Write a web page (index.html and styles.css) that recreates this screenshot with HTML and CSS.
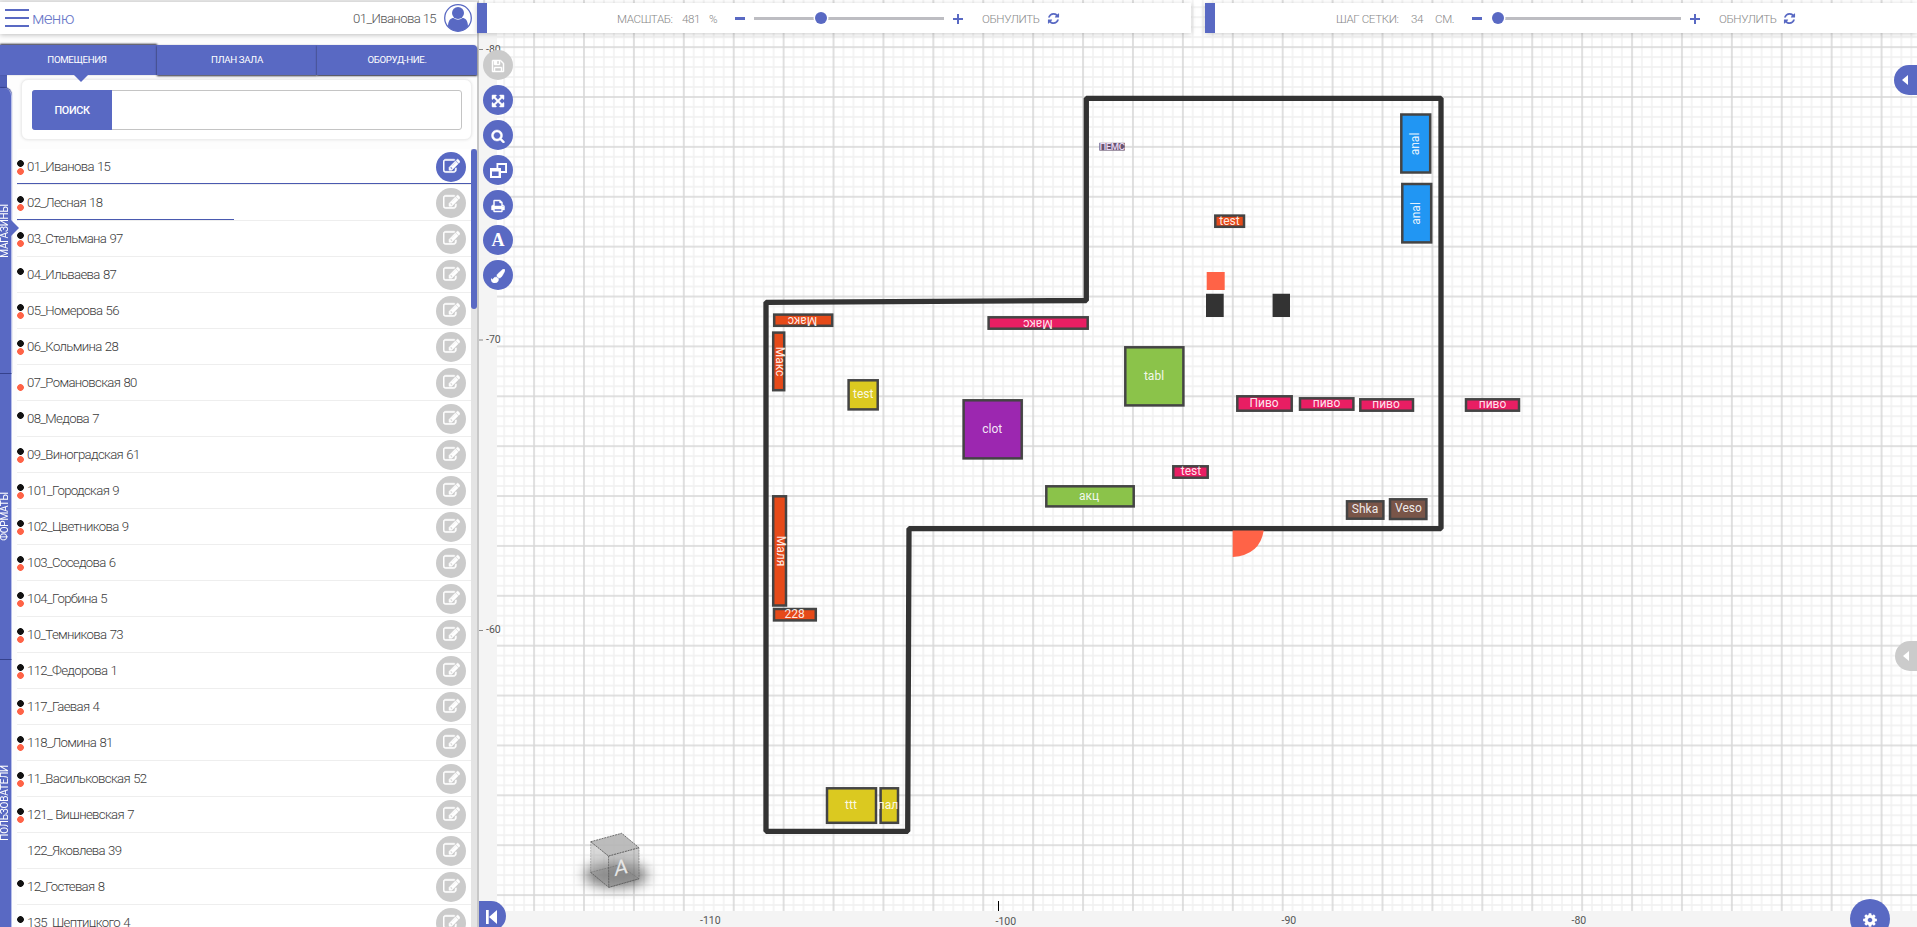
FILE: index.html
```html
<!DOCTYPE html>
<html lang="ru">
<head>
<meta charset="utf-8">
<title>План зала</title>
<link rel="stylesheet" href="styles.css">
</head>
<body>
<svg class="defs" width="0" height="0">
  <symbol id="edit" viewBox="0 0 1792 1792"><path d="M888 1184l116-116-152-152-116 116v56h96v96h56zm440-720q-16-16-33 1l-350 350q-17 17-1 33t33-1l350-350q17-17 1-33zm80 594v190q0 119-84.5 203.5t-203.5 84.5h-832q-119 0-203.5-84.5t-84.5-203.5v-832q0-119 84.5-203.5t203.5-84.5h832q63 0 117 25 15 7 18 23 3 17-9 29l-49 49q-14 14-32 8-23-6-45-6h-832q-66 0-113 47t-47 113v832q0 66 47 113t113 47h832q66 0 113-47t47-113v-126q0-13 9-22l64-64q15-15 35-7t20 29zm-96-738l288 288-672 672h-288v-288zm444 132l-92 92-288-288 92-92q28-28 68-28t68 28l152 152q28 28 28 68t-28 68z"/></symbol>
  <symbol id="save" viewBox="0 0 1792 1792"><path d="M512 1536h768v-384h-768v384zm896 0h128v-896q0-14-10-38.5t-20-34.5l-281-281q-10-10-34-20t-39-10v416q0 40-28 68t-68 28h-576q-40 0-68-28t-28-68v-416h-128v1280h128v-416q0-40 28-68t68-28h832q40 0 68 28t28 68v416zm-384-928v-320q0-13-9.5-22.5t-22.5-9.5h-192q-13 0-22.5 9.5t-9.5 22.5v320q0 13 9.5 22.5t22.5 9.5h192q13 0 22.5-9.5t9.5-22.5zm640 32v928q0 40-28 68t-68 28h-1344q-40 0-68-28t-28-68v-1344q0-40 28-68t68-28h928q40 0 88 20t76 48l280 280q28 28 48 76t20 88z"/></symbol>
  <symbol id="expand" viewBox="0 0 1792 1792"><path d="M1411 541l-355 355 355 355 144-144q29-31 70-14 39 17 39 59v448q0 26-19 45t-45 19h-448q-42 0-59-40-17-39 14-69l144-144-355-355-355 355 144 144q31 30 14 69-17 40-59 40h-448q-26 0-45-19t-19-45v-448q0-42 40-59 39-17 69 14l144 144 355-355-355-355-144 144q-19 19-45 19-12 0-24-5-40-17-40-59v-448q0-26 19-45t45-19h448q42 0 59 40 17 39-14 69l-144 144 355 355 355-355-144-144q-31-30-14-69 17-40 59-40h448q26 0 45 19t19 45v448q0 42-39 59-13 5-25 5-26 0-45-19z"/></symbol>
  <symbol id="search" viewBox="0 0 1792 1792"><path d="M1216 832q0-185-131.5-316.5t-316.5-131.5-316.5 131.5-131.5 316.5 131.5 316.5 316.5 131.5 316.5-131.5 131.5-316.5zm512 832q0 52-38 90t-90 38q-54 0-90-38l-343-342q-179 124-399 124-143 0-273.5-55.5t-225-150-150-225-55.5-273.5 55.5-273.5 150-225 225-150 273.5-55.5 273.5 55.5 225 150 150 225 55.5 273.5q0 220-124 399l343 343q37 37 37 90z"/></symbol>
  <symbol id="layers" viewBox="0 0 17 15"><path fill-rule="evenodd" d="M6.5 0H17V10H11V15H0V5H6.5ZM8.3 1.9V5H11V8.1H15.1V1.9ZM2 8.6V13.1H8.6V8.6Z"/></symbol>
  <symbol id="print" viewBox="0 0 1792 1792"><path d="M448 1536h896v-256h-896v256zm0-640h896v-384h-160q-40 0-68-28t-28-68v-160h-640v640zm1152 64q0-26-19-45t-45-19-45 19-19 45 19 45 45 19 45-19 19-45zm128 0v416q0 13-9.5 22.5t-22.5 9.5h-224v160q0 40-28 68t-68 28h-960q-40 0-68-28t-28-68v-160h-224q-13 0-22.5-9.5t-9.5-22.5v-416q0-79 56.5-135.5t135.5-56.5h64v-544q0-40 28-68t68-28h672q40 0 88 20t76 48l152 152q28 28 48 76t20 88v256h64q79 0 135.5 56.5t56.5 135.5z"/></symbol>
  <symbol id="brush" viewBox="0 0 1792 1792"><path d="M1615 0q70 0 122.5 46.5t52.5 116.5q0 63-45 151-332 629-465 752-97 91-218 91-126 0-216.5-92.5t-90.5-219.5q0-128 92-212l638-579q59-54 130-54zm-909 1034q39 76 106.5 130t150.5 76l1 71q4 213-129.5 347t-348.5 134q-123 0-218-46.5t-152.5-127.5-86.5-183-29-220q7 5 41 30t62 44.5 59 36.5 46 17q41 0 55-37 25-66 57.5-112.5t69.5-76 88-47.5 103-25.5 125-10.5z"/></symbol>
  <symbol id="refresh" viewBox="0 0 1792 1792"><path d="M1639 1056q0 5-1 7-64 268-268 434.5t-478 166.5q-146 0-282.5-55t-243.5-157l-129 129q-19 19-45 19t-45-19-19-45v-448q0-26 19-45t45-19h448q26 0 45 19t19 45-19 45l-137 137q71 66 161 102t187 36q134 0 250-65t186-179q11-17 53-117 8-23 30-23h192q13 0 22.5 9.5t9.5 22.5zm25-800v448q0 26-19 45t-45 19h-448q-26 0-45-19t-19-45 19-45l138-138q-148-137-349-137-134 0-250 65t-186 179q-11 17-53 117-8 23-30 23h-199q-13 0-22.5-9.5t-9.5-22.5v-7q65-268 270-434.5t480-166.5q146 0 284 55.5t245 156.5l130-129q19-19 45-19t45 19 19 45z"/></symbol>
  <symbol id="cog" viewBox="0 0 1792 1792"><path d="M1152 896q0-106-75-181t-181-75-181 75-75 181 75 181 181 75 181-75 75-181zm512-109v222q0 12-8 23t-20 13l-185 28q-19 54-39 91 35 50 107 138 10 12 10 25t-9 23q-27 37-99 108t-94 71q-12 0-26-9l-138-108q-44 23-91 38-16 136-29 186-7 28-36 28h-222q-14 0-24.5-8.5t-11.5-21.5l-28-184q-49-16-90-37l-141 107q-10 9-25 9-14 0-25-11-126-114-165-168-7-10-7-23 0-12 8-23 15-21 51-66.5t54-70.5q-27-50-41-99l-183-27q-13-2-21-12.5t-8-23.5v-222q0-12 8-23t19-13l186-28q14-46 39-92-40-57-107-138-10-12-10-24 0-10 9-23 26-36 98.5-107.5t94.5-71.5q13 0 26 10l138 107q44-23 91-38 16-136 29-186 7-28 36-28h222q14 0 24.5 8.5t11.5 21.5l28 184q49 16 90 37l142-107q9-9 24-9 13 0 25 10 129 119 165 170 7 8 7 22 0 12-8 23-15 21-51 66.5t-54 70.5q26 50 41 98l183 28q13 2 21 12.5t8 23.5z"/></symbol>
  <symbol id="left" viewBox="0 0 6 10"><path d="M6 0V10L0 5Z"/></symbol>
</svg>

<div class="app">
  <aside class="sidebar">
    <header class="head">
      <div class="burger"><i></i><i></i><i></i></div>
      <span class="menu">меню</span>
      <span class="shop">01_Иванова 15</span>
      <svg class="avatar" viewBox="0 0 28 28"><circle cx="14" cy="14" r="13.3" fill="#fff" stroke="#5969c3" stroke-width="1.3"/><circle cx="14" cy="9" r="6" fill="#5969c3"/><path fill="#5969c3" d="M4 22.5C4 16 7 14 9.5 14Q14 17.5 18.500 14C21 14 24 16 24 22.500A13 13 0 0 1 4 22.500Z"/></svg>
    </header>
    <nav class="tabs">
      <div class="tab on">ПОМЕЩЕНИЯ</div>
      <div class="tab">ПЛАН ЗАЛА</div>
      <div class="tab last">ОБОРУД-НИЕ.</div>
    </nav>
    <div class="body">
      <div class="rail">
        <div class="sect first"><span>МАГАЗИНЫ</span></div>
        <div class="sect"><span>ФОРМАТЫ</span></div>
        <div class="sect"><span>ПОЛЬЗОВАТЕЛИ</span></div>
      </div>
      <div class="panel">
        <div class="card"><div class="field"><b>ПОИСК</b></div></div>
        <div class="listwrap">
          <ul class="list">
            <li class="full"><em class="br"></em>01_Иванова 15<span class="ed blue"><svg><use href="#edit"/></svg></span></li>
            <li class="half"><em class="br"></em>02_Лесная 18<span class="ed"><svg><use href="#edit"/></svg></span></li>
            <li><em class="br"></em>03_Стельмана 97<span class="ed"><svg><use href="#edit"/></svg></span></li>
            <li><em class="b"></em>04_Ильваева 87<span class="ed"><svg><use href="#edit"/></svg></span></li>
            <li><em class="br"></em>05_Номерова 56<span class="ed"><svg><use href="#edit"/></svg></span></li>
            <li><em class="br"></em>06_Кольмина 28<span class="ed"><svg><use href="#edit"/></svg></span></li>
            <li><em class="r"></em>07_Романовская 80<span class="ed"><svg><use href="#edit"/></svg></span></li>
            <li><em class="b"></em>08_Медова 7<span class="ed"><svg><use href="#edit"/></svg></span></li>
            <li><em class="br"></em>09_Виноградская 61<span class="ed"><svg><use href="#edit"/></svg></span></li>
            <li><em class="br"></em>101_Городская 9<span class="ed"><svg><use href="#edit"/></svg></span></li>
            <li><em class="br"></em>102_Цветникова 9<span class="ed"><svg><use href="#edit"/></svg></span></li>
            <li><em class="br"></em>103_Соседова 6<span class="ed"><svg><use href="#edit"/></svg></span></li>
            <li><em class="br"></em>104_Горбина 5<span class="ed"><svg><use href="#edit"/></svg></span></li>
            <li><em class="br"></em>10_Темникова 73<span class="ed"><svg><use href="#edit"/></svg></span></li>
            <li><em class="br"></em>112_Федорова 1<span class="ed"><svg><use href="#edit"/></svg></span></li>
            <li><em class="br"></em>117_Гаевая 4<span class="ed"><svg><use href="#edit"/></svg></span></li>
            <li><em class="br"></em>118_Ломина 81<span class="ed"><svg><use href="#edit"/></svg></span></li>
            <li><em class="br"></em>11_Васильковская 52<span class="ed"><svg><use href="#edit"/></svg></span></li>
            <li><em class="br"></em>121_ Вишневская 7<span class="ed"><svg><use href="#edit"/></svg></span></li>
            <li><em></em>122_Яковлева 39<span class="ed"><svg><use href="#edit"/></svg></span></li>
            <li><em class="b"></em>12_Гостевая 8<span class="ed"><svg><use href="#edit"/></svg></span></li>
            <li><em class="b"></em>135_Шептицкого 4<span class="ed"><svg><use href="#edit"/></svg></span></li>
          </ul>
          <div class="scroll"><i></i></div>
        </div>
      </div>
    </div>
  </aside>

  <main class="work">
    <!-- floor plan; user units are window pixels -->
    <svg class="plan" viewBox="477 0 1440 927">
      <defs>
        <pattern id="minor" patternUnits="userSpaceOnUse" x="778.6" y="42.1" width="9.98" height="9.976"><path d="M0 4.99H9.98M4.99 0V9.98" stroke="#000" stroke-opacity=".06" stroke-width="1.4"/></pattern>
        <pattern id="major" patternUnits="userSpaceOnUse" x="758.7" y="22.2" width="49.91" height="49.88"><path d="M0 24.95H49.910M24.95 0V49.9" stroke="#000" stroke-opacity=".1" stroke-width="1.6"/></pattern>
        <filter id="soft" x="-50%" y="-50%" width="200%" height="200%"><feGaussianBlur stdDeviation="7"/></filter>
      </defs>
      <rect x="477" width="1440" height="927" fill="#fff"/>
      <rect x="477" width="1440" height="927" fill="url(#minor)"/>
      <rect x="477" width="1440" height="927" fill="url(#major)"/>

      <ellipse cx="616" cy="875" rx="32" ry="12" fill="#000" opacity=".55" filter="url(#soft)"/>
      <g stroke="#555" stroke-width=".8" stroke-dasharray="2 .8">
        <path d="M590.700 872.300L619 865 639 878.700 609 887.300Z" fill="#777" fill-opacity=".4"/>
        <path d="M590.700 841.700L608.500 856V887.300L590.700 872.300Z" fill="#aaa" fill-opacity=".45" stroke-opacity=".45"/>
        <path d="M608.500 856L639 847.700V878.700L609 887.300Z" fill="#999" fill-opacity=".5" stroke-opacity=".6"/>
        <path d="M590.700 841.700L621.700 833.300 639 847.700 608.500 856Z" fill="#b5b5b5" fill-opacity=".9"/>
      </g>
      <text class="face" transform="translate(621 874.500) skewY(-14)">A</text>

      <path class="ruler" d="M477 33H497V911H1917V927H477Z"/>
      <path d="M479 49.500H483M479 340H483M479 630.500H483" stroke="#888"/>
      <path d="M998.500 901V911" stroke="#000"/>
      <g class="num"><text x="486" y="52.500">-80</text><text x="486" y="343.200">-70</text><text x="486" y="633">-60</text>
        <text x="700" y="923.500">-110</text><text x="995.500" y="925">-100</text><text x="1281.500" y="923.500">-90</text><text x="1571.500" y="923.500">-80</text></g>

      <path d="M1086.300 98.300H1441V528.600H909L907.700 831.300H766V302.300L1086.300 300.500Z" fill="none" stroke="#333" stroke-width="5.300" stroke-linejoin="bevel"/>
      <path d="M1232.700 530.500H1263.700Q1260 555 1232.700 557Z" fill="#ff6347"/>
      <path d="M1206.700 272H1224.700V290H1206.700Z" fill="#ff6347"/>
      <path d="M1206 293.700H1223.700V317H1206ZM1272.600 293.700H1290V317H1272.600Z" fill="#333"/>

      <g class="items">
        <rect x="774.2" y="314.6" width="58" height="11.200" fill="#e64a19"/>
        <rect x="773.2" y="332.600" width="11" height="57.600" fill="#e64a19"/>
        <rect x="773.2" y="496.300" width="12.800" height="109.200" fill="#e64a19"/>
        <rect x="774" y="609" width="41.800" height="11.400" fill="#e64a19"/>
        <rect x="1215.300" y="215.600" width="28.700" height="11.200" fill="#e64a19"/>
        <rect x="848.600" y="380.300" width="29.100" height="29.100" fill="#dbc920"/>
        <rect x="827" y="788.300" width="49" height="34.500" fill="#dbc920"/>
        <rect x="880.600" y="788.300" width="17.400" height="34.500" fill="#dbc920"/>
        <rect x="963.600" y="400.300" width="58.100" height="58.100" fill="#9c27b0"/>
        <rect x="1125.300" y="347.300" width="58.100" height="58.100" fill="#8bc34a"/>
        <rect x="1046.300" y="486.300" width="87.400" height="20.100" fill="#8bc34a"/>
        <rect x="988.600" y="317.300" width="99.100" height="11.400" fill="#e91e63"/>
        <rect x="1173.300" y="466.300" width="34.400" height="11.400" fill="#e91e63"/>
        <rect x="1237.300" y="396.300" width="54.400" height="14.400" fill="#e91e63"/>
        <rect x="1300" y="398.300" width="53.400" height="11.400" fill="#e91e63"/>
        <rect x="1360.300" y="399.300" width="52.700" height="11.400" fill="#e91e63"/>
        <rect x="1466" y="399.300" width="53" height="11.400" fill="#e91e63"/>
        <rect x="1347" y="501.300" width="36.400" height="17.400" fill="#795548"/>
        <rect x="1390" y="499.300" width="36.400" height="19.700" fill="#795548"/>
        <rect x="1401.300" y="114.500" width="28.900" height="58" fill="#2196f3"/>
        <rect x="1402.300" y="184" width="28.900" height="58.400" fill="#2196f3"/>
      </g>
      <g class="tags">
        <text transform="translate(802.500 316.500) rotate(180)">Макс</text>
        <text transform="translate(775.500 361.500) rotate(90)">Макс</text>
        <text transform="translate(776.500 551) rotate(90)">Маля</text>
        <text x="794.700" y="618">228</text>
        <text x="1229.500" y="224.700">test</text>
        <text x="863.300" y="398">test</text>
        <text x="851" y="808.500">ttt</text>
        <text x="888" y="808.500">пал</text>
        <text x="992.300" y="433">clot</text>
        <text x="1154" y="379.500">tabl</text>
        <text x="1089" y="500">акц</text>
        <text transform="translate(1038 320) rotate(180)">Макс</text>
        <text x="1191" y="474.500">test</text>
        <text x="1264" y="407">Пиво</text>
        <text x="1326.500" y="406.700">пиво</text>
        <text x="1386" y="407.500">пиво</text>
        <text x="1492.500" y="407.500">пиво</text>
        <text x="1365" y="512.500">Shka</text>
        <text x="1408.500" y="512">Veso</text>
        <text transform="translate(1419 144) rotate(-90)">anal</text>
        <text transform="translate(1420 213.500) rotate(-90)">anal</text>
      </g>
      <rect x="1099.300" y="142.800" width="25.500" height="7.800" fill="#665470"/>
      <text class="tiny" x="1112" y="150.300">ПЕМС</text>
    </svg>

    <div class="bars">
      <div class="bar zoom">
        <span class="w1">МАСШТАБ:</span><span class="w2">481</span><span class="w3">%</span>
        <i class="minus"></i><div class="track t1"><i></i></div><i class="minus plus"></i>
        <span class="w4">ОБНУЛИТЬ</span><svg class="re"><use href="#refresh"/></svg>
      </div>
      <div class="bar step">
        <span class="w5">ШАГ СЕТКИ:</span><span class="w6">34</span><span class="w7">СМ.</span>
        <i class="minus"></i><div class="track t2"><i></i></div><i class="minus plus"></i>
        <span class="w8">ОБНУЛИТЬ</span><svg class="re"><use href="#refresh"/></svg>
      </div>
    </div>
    <div class="tools">
      <span class="off"><svg><use href="#save"/></svg></span>
      <span><svg><use href="#expand"/></svg></span>
      <span><svg><use href="#search"/></svg></span>
      <span><svg class="wide"><use href="#layers"/></svg></span>
      <span><svg><use href="#print"/></svg></span>
      <span class="letter">A</span>
      <span><svg><use href="#brush"/></svg></span>
    </div>
    <div class="pull up"><svg><use href="#left"/></svg></div>
    <div class="pull down"><svg><use href="#left"/></svg></div>
    <div class="rewind"><svg viewBox="0 0 11 14"><path d="M0 0H2.700V14H0ZM11 0V14L3 7Z"/></svg></div>
    <div class="gear"><svg><use href="#cog"/></svg></div>
  </main>
</div>
</body>
</html>
```
FILE: styles.css
```css
* { box-sizing: border-box; }
body { margin: 0; font-family: Roboto, "Noto Sans", sans-serif; font-weight: 300; overflow: hidden; }
.defs { position: absolute; }
svg { fill: currentColor; display: block; }
.app { display: flex; height: 927px; overflow: hidden; }

.sidebar { width: 479px; flex: none; background: #fdfdfd; border-top: 2px solid #ececec; border-right: 2px solid #c8c8c8; display: flex; flex-direction: column; position: relative; z-index: 1; }
.head { height: 32px; flex: none; background: #fff; box-shadow: 0 1px 5px rgba(0,0,0,.25); display: flex; align-items: center; padding: 0 5px; font-size: 13.2px; color: #555; }
.burger { width: 24px; display: flex; flex-direction: column; gap: 6px; margin-right: 3px; }
.burger i { height: 2px; background: #5969c3; }
.menu { font-size: 17px; letter-spacing: -.7px; color: #6b79c9; flex: 1; }
.shop { margin-right: 8px; letter-spacing: -.64px; }
.avatar { width: 28px; height: 28px; }

.tabs { height: 30px; flex: none; margin-top: 11px; display: grid; grid-template-columns: 157px 160px 160px; position: relative; z-index: 2; }
.tab { background: #5969c3; color: #fff; font-size: 9.7px; font-weight: 400; display: flex; align-items: center; justify-content: center; letter-spacing: -.35px; padding-bottom: 1px; box-shadow: 0 1px 2px #223; position: relative; }
.tab.on { box-shadow: 0 -1px 2px #223; padding-right: 3px; }
.tab.on::after { content: ""; position: absolute; left: 74px; top: 30px; border: 7px solid transparent; border-top-color: #5969c3; border-bottom: 0; }
.tab.last { border-radius: 0 4px 0 0; }

.body { flex: 1; display: flex; min-height: 0; }
.rail { width: 12px; flex: none; padding-top: 13px; background: linear-gradient(90deg, #5060b8 7px, transparent 7px) top/100% 18px no-repeat; }
.sect { height: 286px; width: 12px; background: #5969c3; border-bottom: 1px solid #35418c; border-right: 1px solid #b9c0ea; display: flex; align-items: center; justify-content: flex-start; color: #fff; position: relative; font-size: 10px; font-weight: 400; }
.sect span { writing-mode: vertical-rl; transform: rotate(180deg); line-height: 9px; letter-spacing: -.2px; }
.first { border-radius: 0 8px 0 0; box-shadow: 0 -1px 1px #35418c; }
.first::after { content: ""; position: absolute; left: 11px; top: 132px; border: 8px solid transparent; border-left-color: #5969c3; border-right: 0; }
.panel { flex: 1; display: flex; flex-direction: column; min-width: 0; padding-left: 5px; }
.card { height: 61px; flex: none; margin: 4px 5px 0 4px; border-radius: 7px; background: #fff; border: 1px solid #eee; box-shadow: 0 0 3px rgba(0,0,0,.1); padding: 10px 9px 10px 10px; }
.field { height: 40px; border: 1px solid #c4c4c4; border-radius: 3px; display: flex; }
.field b { width: 80px; margin: -1px; background: #5969c3; color: #fff; font-size: 10.8px; font-weight: 500; letter-spacing: -.35px; display: flex; align-items: center; justify-content: center; border-radius: 3px 0 0 3px; }

.listwrap { flex: 1; display: flex; min-height: 0; padding-top: 9px; }
.list { flex: 1; list-style: none; margin: 0; padding: 0; background: #fff; overflow: hidden; }
.list li { height: 36px; border-bottom: 1px solid #eee; display: flex; align-items: center; font-size: 13.2px; letter-spacing: -.66px; word-spacing: .6px; color: #3c3c3c; position: relative; }
.list li.full::after, .list li.half::after { content: ""; position: absolute; left: 0; bottom: 0; width: 100%; height: 1px; background: #4a5ab0; }
.list li.half::after { width: 217px; }
.list em { width: 7px; height: 15px; margin: 1px 3px 0 0; }
.b, .br { background: radial-gradient(circle at 3.5px 3.5px, #111 3px, transparent 3.7px); }
.r { background: radial-gradient(circle at 3.5px 11.5px, #ff6347 3px, transparent 3.7px); }
.br { background: radial-gradient(circle at 3.5px 3.5px, #111 3px, transparent 3.7px), radial-gradient(circle at 3.5px 11.5px, #ff6347 3px, transparent 3.7px); }
.ed { width: 30px; height: 30px; border-radius: 50%; background: #cbcbcb; color: #fff; margin-left: auto; margin-right: 5px; display: flex; align-items: center; justify-content: center; }
.ed.blue { background: #5969c3; }
.ed svg { width: 17px; height: 17px; stroke: #fff; stroke-width: 60px; }
.scroll { width: 6px; background: #e4e4e4; }
.scroll i { display: block; height: 160px; background: #5969c3; border-radius: 3px; }

.work { flex: 1; position: relative; margin-left: -2px; display: flex; flex-direction: column; }
.plan { position: absolute; left: 0; top: 0; width: 1440px; height: 927px; }
.ruler { fill: #f4f4f4; }
.num { font-size: 10.5px; font-weight: 400; fill: #555; }
.items rect { stroke: #444; stroke-width: 2.500px; }
.tags { font-size: 12px; font-weight: 400; fill: #fff; fill-opacity: .9; text-anchor: middle; }
.tiny { font-size: 9.5px; font-weight: 500; fill: #ead9f3; letter-spacing: -.4px; text-anchor: middle; }
.face { font-size: 21px; font-weight: 400; fill: #e6e6e6; text-anchor: middle; }

.bars { position: relative; z-index: 2; display: flex; gap: 14px; padding-top: 3px; }
.bar { height: 30px; background: #fff; border-left: 10px solid #5969c3; box-shadow: 0 1px 5px rgba(0,0,0,.2); display: flex; align-items: center; font-size: 11.6px; letter-spacing: -.4px; color: #888; white-space: nowrap; padding-top: 1px; }
.zoom { width: 714px; padding-left: 130px; }
.step { flex: 1; padding-left: 121px; }
.w1 { width: 65px; } .w2 { width: 27px; } .w3 { width: 26px; }
.w5 { width: 75px; } .w6 { width: 24px; } .w7 { width: 37px; }
.minus { width: 10px; height: 10px; background: linear-gradient(#5969c3, #5969c3) center/10px 3px no-repeat; }
.plus { background: linear-gradient(#5969c3, #5969c3) center/10px 2px no-repeat, linear-gradient(#5969c3, #5969c3) center/2px 10px no-repeat; margin-left: 9px; }
.track { width: 190px; height: 3px; background: #bdbdc2; margin-left: 9px; position: relative; }
.track i { position: absolute; left: 61px; top: -5px; width: 12px; height: 12px; border-radius: 50%; background: #5969c3; box-shadow: 0 0 0 1.500px #fff; }
.t2 i { left: 1px; }
.w4 { width: 65px; margin-left: 19px; }
.w8 { width: 64px; margin-left: 19px; }
.re { width: 13px; height: 13px; color: #5969c3; }

.tools { position: relative; width: 30px; margin: 17px 0 0 6px; display: flex; flex-direction: column; gap: 5px; color: #fff; }
.tools span { height: 30px; border-radius: 50%; background: #5969c3; display: flex; align-items: center; justify-content: center; }
.tools .off { background: #cbcbcb; }
.tools svg { width: 14px; height: 14px; margin-top: 1px; stroke: #fff; stroke-width: 60px; overflow: visible; }
.tools .wide { width: 17px; height: 15px; stroke-width: 0; }
.tools .letter { font: bold 18px "Liberation Serif", serif; }
.pull { position: absolute; right: 0; width: 23px; height: 30px; border-radius: 15px 0 0 15px; background: #5969c3; color: #fff; padding: 10px 0 0 8px; }
.pull svg { width: 6px; height: 10px; }
.up { top: 65px; }
.down { top: 641px; background: #cbcbcb; width: 22px; }
.rewind { position: absolute; left: 0; top: 901px; width: 29px; height: 30px; border-radius: 0 15px 15px 0; background: #5969c3; color: #fff; padding: 9px 0 0 9px; }
.rewind svg { width: 11px; height: 14px; }
.gear { position: absolute; right: 27px; top: 899px; width: 40px; height: 40px; border-radius: 50%; background: #5969c3; color: #fff; padding: 13px 0 0 12px; }
.gear svg { width: 16px; height: 16px; }
```
